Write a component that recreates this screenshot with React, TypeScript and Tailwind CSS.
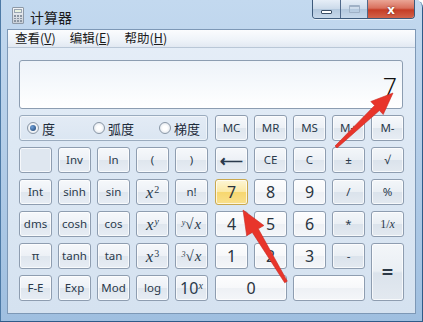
import type { ReactNode } from "react";

const cjk = "font-['Microsoft_YaHei','Noto_Sans_CJK_SC',sans-serif]";
const ui = "font-['Noto_Sans','Open_Sans',sans-serif]";
const math = "font-['Liberation_Serif',serif] italic";

type Kind = "fn" | "num" | "op" | "hot" | "flat";

const kinds: Record<Kind, string> = {
  fn: "bg-[linear-gradient(180deg,#f6f8fb_0%,#edf1f6_48%,#dfe6ee_52%,#e7edf4_100%)] text-[#2a3a4c]",
  num: "bg-[linear-gradient(180deg,#fdfdfe_0%,#f7f8fa_48%,#eef1f5_52%,#f4f6f9_100%)] text-[#2a3440]",
  op: "bg-[linear-gradient(180deg,#f3f6f9_0%,#eaeff4_48%,#dbe3ec_52%,#e3e9f0_100%)] text-[#2a3a4c]",
  hot: "bg-[linear-gradient(180deg,#fdf6d6_0%,#fbe9a6_48%,#f7d76f_52%,#f9e08c_100%)] border-[#c9a84f] text-[#2a3440]",
  flat: "bg-[#dfe7f0] text-[#2a3a4c]",
};

function Key({
  children,
  kind = "fn",
  className = "",
}: {
  children?: ReactNode;
  kind?: Kind;
  className?: string;
}) {
  return (
    <div
      className={`flex items-center justify-center rounded-[3px] border border-[#8e9db0] leading-none shadow-[inset_0_0_0_1px_rgba(255,255,255,0.7)] ${kinds[kind]} ${className}`}
    >
      {children}
    </div>
  );
}

const Sup = ({ base, sup }: { base: ReactNode; sup: ReactNode }) => (
  <span className={`${math} text-[17px] text-[#2a3a4c]`}>
    {base}
    <sup className="ml-[1px] text-[10px] not-italic">{sup}</sup>
  </span>
);

// index sits just before the radical sign
const Root = ({ idx }: { idx: string }) => (
  <span className={`${math} whitespace-nowrap text-[15px] text-[#2a3a4c]`}>
    <sup className="text-[8px]">{idx}</sup>
    <span className="not-italic">√</span>
    <span className="ml-[1px]">x</span>
  </span>
);

function Radio({ on, label }: { on?: boolean; label: string }) {
  return (
    <div className="flex w-[66px] shrink-0 items-center gap-[3px] whitespace-nowrap">
      <span className="flex h-[12px] w-[12px] shrink-0 items-center justify-center rounded-full border border-[#8a97a6] bg-[radial-gradient(circle,#ffffff_30%,#d6dde6_100%)]">
        {on && <span className="h-[6px] w-[6px] rounded-full bg-[radial-gradient(circle_at_35%_35%,#6fa0d8,#1b3f6e)]" />}
      </span>
      <span className={`${cjk} text-[13px] leading-none text-[#1d2b3a]`}>{label}</span>
    </div>
  );
}

function MenuItem({ label, hot }: { label: string; hot: string }) {
  return (
    <span className={`${cjk} text-[12.5px] text-[#1b1b1b]`}>
      {label}(<span className="underline">{hot}</span>)
    </span>
  );
}

export default function App() {
  const t = `${ui} text-[11.5px]`;
  const d = `${ui} text-[16px]`;
  return (
    <div className="relative h-[322px] w-[423px] overflow-hidden rounded-tr-[8px] bg-[linear-gradient(180deg,#c3d9ef_0%,#b6cfe9_40%,#9fbfe0_100%)] shadow-[inset_-1px_-1px_0_#2f5b88,inset_1px_0_0_#4d7aa6]">
      {/* title bar */}
      <div className="flex h-[29px] items-start">
        <div className="mt-[7px] ml-[12px] flex h-[17px] w-[12px] flex-col rounded-[1px] border border-[#8d99a6] bg-[linear-gradient(180deg,#f2f4f6,#c9d0d8)] p-[1px]">
          <div className="h-[4px] border border-[#9aa6b2] bg-[#e8f2e0]" />
          <div className="mt-[2px] grid grid-cols-3 gap-[1px]">
            {Array.from({ length: 9 }).map((_, i) => (
              <span key={i} className="h-[1.5px] bg-[#8a95a1]" />
            ))}
          </div>
        </div>
        <span className={`${cjk} mt-[7px] ml-[6px] text-[14px] text-[#1a1a1a]`}>计算器</span>
        <div className="mr-[8px] ml-auto flex h-[19px] overflow-hidden rounded-b-[4px] border border-t-0 border-[#3d5a7b] shadow-[0_1px_0_rgba(255,255,255,0.6)]">
          <div className="flex w-[28px] items-center justify-center border-r border-[#50698a] bg-[linear-gradient(180deg,#e6eef7_0%,#cbdaea_50%,#b3c8de_51%,#c7d8ea_100%)]">
            <span className="mt-[5px] h-[4px] w-[11px] rounded-[1px] border border-[#3c4f66] bg-white" />
          </div>
          <div className="flex w-[27px] items-center justify-center border-r border-[#50698a] bg-[linear-gradient(180deg,#e6eef7_0%,#cbdaea_50%,#b3c8de_51%,#c7d8ea_100%)]">
            <span className="h-[8px] w-[11px] rounded-[1px] border border-t-[2px] border-[#9fb1c6]" />
          </div>
          <div className="flex w-[46px] items-center justify-center bg-[linear-gradient(180deg,#eaa595_0%,#d9705d_45%,#c53d26_55%,#d2634a_100%)]">
            <span className={`${ui} text-[13px] leading-none font-bold text-white [text-shadow:0_0_2px_#5a1a10]`}>x</span>
          </div>
        </div>
      </div>

      {/* client area */}
      <div className="mr-[7px] ml-[7px] h-[285px] border border-[#7d98b6] bg-[linear-gradient(180deg,#e6eef8_0%,#dde8f4_40%,#d5e2f0_100%)]">
        <div className="flex h-[18px] items-center gap-[14px] border-b border-[#b9c7d7] bg-[linear-gradient(180deg,#fbfcfe_0%,#eef3f9_60%,#e2e9f2_100%)] pl-[7px]">
          <MenuItem label="查看" hot="V" />
          <MenuItem label="编辑" hot="E" />
          <MenuItem label="帮助" hot="H" />
        </div>

        <div className="pt-[12px] pr-[12px] pl-[11px]">
          {/* display */}
          <div className="flex h-[49px] items-end justify-end rounded-[3px] border border-[#8c9db1] bg-[linear-gradient(180deg,#eef3f9_0%,#f6f9fc_50%,#ffffff_100%)] pr-[5px] pb-[9px]">
            <span className={`${ui} text-[25px] leading-none font-light text-[#111]`}>7</span>
          </div>

          <div className="mt-[6px] flex gap-[7px]">
            {/* left pad */}
            <div className="grid grid-cols-[repeat(5,33px)] grid-rows-[repeat(6,26px)] gap-[6px]">
              <div className="col-span-5 flex items-center rounded-[3px] border border-[#9aabbe] bg-[linear-gradient(180deg,#e3ebf5,#dbe6f2)] pl-[7px] shadow-[inset_0_0_0_1px_rgba(255,255,255,0.5)]">
                <Radio on label="度" />
                <Radio label="弧度" />
                <Radio label="梯度" />
              </div>

              <Key kind="flat" />
              <Key><span className={t}>Inv</span></Key>
              <Key><span className={t}>ln</span></Key>
              <Key><span className={t}>(</span></Key>
              <Key><span className={t}>)</span></Key>

              <Key><span className={t}>Int</span></Key>
              <Key><span className={t}>sinh</span></Key>
              <Key><span className={t}>sin</span></Key>
              <Key><Sup base="x" sup="2" /></Key>
              <Key><span className={t}>n!</span></Key>

              <Key><span className={t}>dms</span></Key>
              <Key><span className={t}>cosh</span></Key>
              <Key><span className={t}>cos</span></Key>
              <Key><Sup base="x" sup={<i>y</i>} /></Key>
              <Key><Root idx="y" /></Key>

              <Key><span className={t}>π</span></Key>
              <Key><span className={t}>tanh</span></Key>
              <Key><span className={t}>tan</span></Key>
              <Key><Sup base="x" sup="3" /></Key>
              <Key><Root idx="3" /></Key>

              <Key><span className={t}>F-E</span></Key>
              <Key><span className={t}>Exp</span></Key>
              <Key><span className={t}>Mod</span></Key>
              <Key><span className={t}>log</span></Key>
              <Key>
                <span className={`${ui} text-[16px] text-[#2a3a4c]`}>
                  10<sup className={`${math} text-[10px]`}>x</sup>
                </span>
              </Key>
            </div>

            {/* right pad */}
            <div className="grid grid-cols-[repeat(5,33px)] grid-rows-[repeat(6,26px)] gap-[6px]">
              <Key><span className={t}>MC</span></Key>
              <Key><span className={t}>MR</span></Key>
              <Key><span className={t}>MS</span></Key>
              <Key><span className={t}>M+</span></Key>
              <Key><span className={t}>M-</span></Key>

              <Key><span className="text-[16px] leading-none font-bold text-[#2a3a4c]">⟵</span></Key>
              <Key><span className={t}>CE</span></Key>
              <Key><span className={t}>C</span></Key>
              <Key kind="op"><span className={t}>±</span></Key>
              <Key kind="op"><span className={t}>√</span></Key>

              <Key kind="hot"><span className={d}>7</span></Key>
              <Key kind="num"><span className={d}>8</span></Key>
              <Key kind="num"><span className={d}>9</span></Key>
              <Key kind="op"><span className={t}>/</span></Key>
              <Key kind="op"><span className={t}>%</span></Key>

              <Key kind="num"><span className={d}>4</span></Key>
              <Key kind="num"><span className={d}>5</span></Key>
              <Key kind="num"><span className={d}>6</span></Key>
              <Key kind="op"><span className={t}>*</span></Key>
              <Key kind="op"><span className={`${math} text-[12px] not-italic`}>1/<i>x</i></span></Key>

              <Key kind="num"><span className={d}>1</span></Key>
              <Key kind="num"><span className={d}>2</span></Key>
              <Key kind="num"><span className={d}>3</span></Key>
              <Key kind="op"><span className={t}>-</span></Key>
              <Key kind="op" className="row-span-2"><span className={`${ui} text-[20px] font-bold text-[#2b3846]`}>=</span></Key>

              <Key kind="num" className="col-span-2"><span className={d}>0</span></Key>
              <Key kind="num" className="col-span-2" />
            </div>
          </div>
        </div>
      </div>

      {/* annotation arrows */}
      <svg className="pointer-events-none absolute inset-0" width="423" height="322" viewBox="0 0 423 322">
        <polygon
          points="335,146 374.6,105.5 370.8,101.5 393,93 383.2,114.5 379.4,110.5 337,148"
          fill="#e8352b"
          stroke="#c92a22"
          strokeWidth="0.6"
        />
        <polygon
          points="287.3,281.2 258.3,228.8 263.9,225.5 243,210 246.7,235.7 252.3,232.4 284.7,282.8"
          fill="#e8352b"
          stroke="#c92a22"
          strokeWidth="0.6"
        />
      </svg>
    </div>
  );
}
